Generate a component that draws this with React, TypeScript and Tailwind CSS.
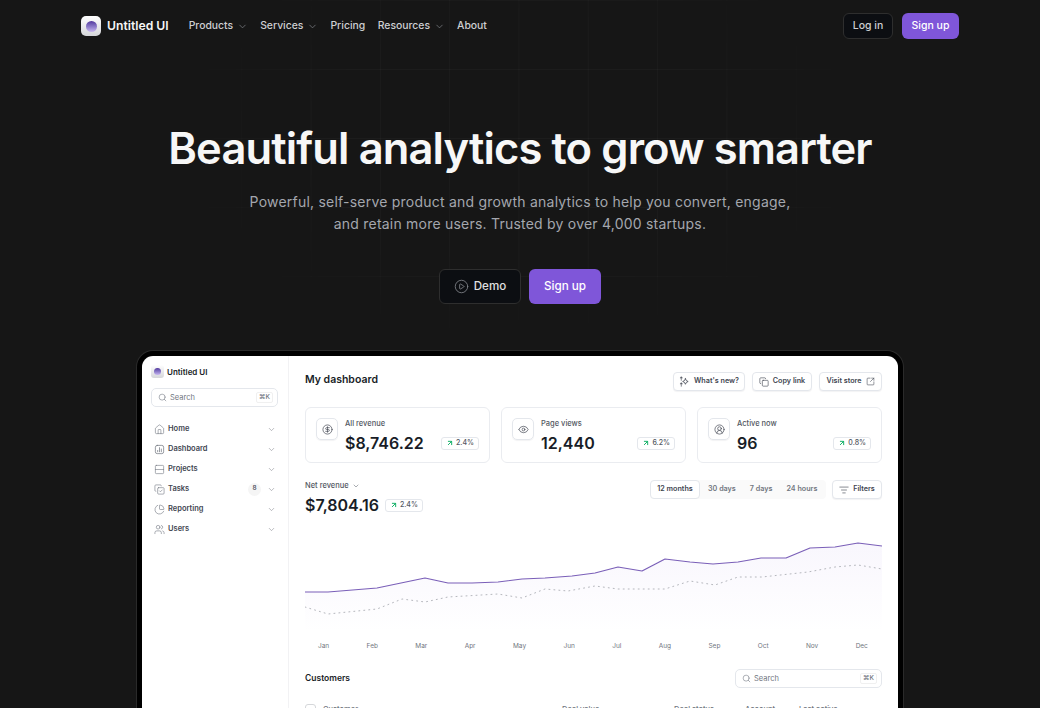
import { ArrowUpRight, ChartPie, ChevronDown, CirclePlay, CircleDollarSign, CircleUserRound, Copy, CopyCheck, Eye, House, ListFilter, Rows2, Search, SquareArrowOutUpRight, Users } from 'lucide-react';
import type { ReactNode } from 'react';

const solid = [[0, 52], [23, 52], [72, 48], [120, 38], [143, 43], [167, 43], [193, 42], [217, 39], [240, 38], [267, 36], [290, 33], [313, 27], [337, 31], [360, 19], [385, 22], [408, 24], [433, 22], [456, 18], [481, 18], [505, 8], [530, 7], [553, 3], [577, 6]];
const dotted = [[0, 67], [23, 74], [72, 69], [97, 59], [120, 62], [143, 57], [193, 54], [217, 58], [240, 49], [263, 51], [290, 46], [313, 49], [360, 49], [385, 41], [410, 45], [433, 37], [457, 37], [503, 32], [530, 27], [553, 25], [577, 29]];
const line = (pts: number[][]) => pts.map((p) => p.join(',')).join(' ');

const months = ['Jan', 'Feb', 'Mar', 'Apr', 'May', 'Jun', 'Jul', 'Aug', 'Sep', 'Oct', 'Nov', 'Dec'];

function Logo({ box, dot }: { box: string; dot: string }) {
  return (
    <div className={`grid place-items-center bg-gradient-to-b from-white to-[#d5d6da] ${box}`}>
      <div className={`rounded-full bg-gradient-to-b from-[#53389e] to-[#c9b8f0] ${dot}`} />
    </div>
  );
}

function NavItem({ label, menu }: { label: string; menu?: boolean }) {
  return (
    <a className="flex items-center gap-[3.5px] text-[10.4px] leading-none font-medium text-[#cecfd2]">
      {label}
      {menu ? <ChevronDown size={11} strokeWidth={1.5} className="text-[#85888e]" /> : null}
    </a>
  );
}

function SideItem({ icon, label, count }: { icon: ReactNode; label: string; count?: string }) {
  return (
    <div className="flex h-5 items-center pl-[3px] pr-[3px] text-[#414651]">
      <span className="w-[14px] text-[#717680]">{icon}</span>
      <span className="flex-1 text-[7.5px] font-semibold">{label}</span>
      {count ? (
        <span className="mr-[6px] grid size-[13px] place-items-center rounded-full bg-[#f5f5f5] text-[6.5px] font-medium">{count}</span>
      ) : null}
      <ChevronDown size={9} strokeWidth={1.5} className="text-[#85888e]" />
    </div>
  );
}

function OutlineButton({ width, children }: { width: string; children: ReactNode }) {
  return (
    <button type="button" className={`flex h-[19px] items-center justify-center gap-1 rounded-[4px] border border-[#e4e7ec] bg-white text-[7.2px] font-semibold text-[#414651] shadow-[0_1px_1px_rgba(16,24,40,0.05)] ${width}`}>
      {children}
    </button>
  );
}

function Trend({ value }: { value: string }) {
  return (
    <span className="flex h-[13px] items-center gap-[2px] rounded-[3px] border border-[#e4e7ec] bg-white px-[4px] text-[7px] font-medium text-[#535862]">
      <ArrowUpRight size={8} strokeWidth={3} className="text-[#17b26a]" />
      {value}
    </span>
  );
}

function StatCard({ icon, label, value, change }: { icon: ReactNode; label: string; value: string; change: string }) {
  return (
    <div className="flex h-[56px] flex-1 gap-[7px] rounded-[6px] border border-[#eaecf0] bg-white px-[10px] pt-[10px]">
      <div className="grid size-[22px] shrink-0 place-items-center rounded-[5px] border border-[#e4e7ec] text-[#414651] shadow-[0_1px_1px_rgba(16,24,40,0.05)]">
        {icon}
      </div>
      <div className="flex-1">
        <p className="mt-[1px] text-[7.5px] leading-[10px] font-medium text-[#535862]">{label}</p>
        <div className="mt-[4px] flex items-center justify-between">
          <span className="text-[16px] leading-[20px] font-semibold text-[#181d27]">{value}</span>
          <Trend value={change} />
        </div>
      </div>
    </div>
  );
}

function SearchField({ width }: { width: string }) {
  return (
    <div className={`flex h-[19px] items-center gap-[3px] rounded-[5px] border border-[#e4e7ec] bg-white pl-[6px] pr-[4px] text-[7.5px] text-[#717680] ${width}`}>
      <Search size={9} strokeWidth={1.5} />
      <span className="flex-1">Search</span>
      <span className="rounded-[2px] border border-[#f0f0f0] px-[2px] text-[6.5px] leading-[9px] font-medium">⌘K</span>
    </div>
  );
}

function Sparkles() {
  return (
    <svg width="11" height="11" viewBox="0 0 24 24" fill="none" stroke="currentColor" strokeWidth="1.8" strokeLinecap="round" strokeLinejoin="round" aria-hidden>
      <path d="M14 6l2 4 4 2-4 2-2 4-2-4-4-2 4-2 2-4z" />
      <path d="M5 2v3M5 8v1M3 4h4M5 15v3M3 17h4M5 21v1" />
    </svg>
  );
}

function BarsIcon() {
  return (
    <svg width="11" height="11" viewBox="0 0 24 24" fill="none" stroke="currentColor" strokeWidth="1.6" strokeLinecap="round" strokeLinejoin="round" aria-hidden>
      <rect x="3" y="3" width="18" height="18" rx="4" />
      <path d="M8 17v-3M12 17V8M16 17v-6" />
    </svg>
  );
}

function Chart() {
  return (
    <svg width="577" height="100" viewBox="0 0 577 100" fill="none" className="block" aria-hidden>
      <defs>
        <linearGradient id="revenueFill" x1="0" y1="0" x2="0" y2="1">
          <stop offset="0" stopColor="#7f56d9" stopOpacity="0.05" />
          <stop offset="1" stopColor="#7f56d9" stopOpacity="0" />
        </linearGradient>
      </defs>
      <polygon points={`${line(solid)} 577,92 0,92`} fill="url(#revenueFill)" />
      <polyline points={line(dotted)} stroke="#b5b7bd" strokeWidth="1" strokeDasharray="1 4" strokeLinecap="round" />
      <polyline points={line(solid)} stroke="#7a5fb8" strokeWidth="1.2" strokeLinejoin="round" />
    </svg>
  );
}

function Dashboard() {
  return (
    <div className="ml-[137px] w-[766px] rounded-[16px] border-[5px] border-black bg-black shadow-[0_0_0_1px_#2a2a2a]">
      <div className="flex h-[500px] overflow-hidden rounded-[11px] bg-white [font-family:Inter,sans-serif]">
        <aside className="w-[147px] shrink-0 border-r border-[#f2f2f4] px-[9px] pt-[9px]">
          <div className="flex items-center gap-[3px]">
            <Logo box="size-[13px] rounded-[3px]" dot="size-[7px]" />
            <span className="text-[8px] font-semibold text-[#181d27]">Untitled UI</span>
          </div>
          <SearchField width="mt-[10px] w-[127px]" />
          <nav className="mt-[12px]">
            <SideItem icon={<House size={11} strokeWidth={1.3} />} label="Home" />
            <SideItem icon={<BarsIcon />} label="Dashboard" />
            <SideItem icon={<Rows2 size={11} strokeWidth={1.3} />} label="Projects" />
            <SideItem icon={<CopyCheck size={11} strokeWidth={1.3} />} label="Tasks" count="8" />
            <SideItem icon={<ChartPie size={11} strokeWidth={1.3} />} label="Reporting" />
            <SideItem icon={<Users size={11} strokeWidth={1.3} />} label="Users" />
          </nav>
        </aside>

        <main className="flex-1 px-[16px] pt-[16px]">
          <div className="flex h-[19px] items-start justify-between">
            <h2 className="text-[10.5px] leading-[15px] font-semibold text-[#181d27]">My dashboard</h2>
            <div className="flex gap-[7px]">
              <OutlineButton width="w-[72px]"><Sparkles />What's new?</OutlineButton>
              <OutlineButton width="w-[60px]"><Copy size={10} strokeWidth={1.5} />Copy link</OutlineButton>
              <OutlineButton width="w-[63px]">Visit store<SquareArrowOutUpRight size={9} strokeWidth={1.5} /></OutlineButton>
            </div>
          </div>

          <div className="mt-[16px] flex gap-[11px]">
            <StatCard icon={<CircleDollarSign size={11} strokeWidth={1.5} />} label="All revenue" value="$8,746.22" change="2.4%" />
            <StatCard icon={<Eye size={11} strokeWidth={1.5} />} label="Page views" value="12,440" change="6.2%" />
            <StatCard icon={<CircleUserRound size={11} strokeWidth={1.5} />} label="Active now" value="96" change="0.8%" />
          </div>

          <div className="mt-[17px] flex items-start justify-between">
            <div className="pt-[1px]">
              <div className="flex items-center gap-[3px] text-[7.5px] leading-[10px] font-medium text-[#535862]">
                Net revenue
                <ChevronDown size={8} strokeWidth={1.5} />
              </div>
              <div className="mt-[2px] flex items-center gap-[6px]">
                <span className="text-[16px] leading-[24px] font-semibold text-[#181d27]">$7,804.16</span>
                <Trend value="2.4%" />
              </div>
            </div>
            <div className="flex gap-[6px]">
              <div className="flex h-[19px] w-[176px] items-center rounded-[4px] bg-[#fafafa] text-[7.2px] font-semibold text-[#717680]">
                <span className="flex h-[19px] w-[50px] items-center justify-center rounded-[4px] border border-[#e4e7ec] bg-white text-[#414651]">12 months</span>
                <span className="ml-[8px]">30 days</span>
                <span className="ml-[14px]">7 days</span>
                <span className="ml-[14px]">24 hours</span>
              </div>
              <OutlineButton width="w-[50px]"><ListFilter size={10} strokeWidth={1.5} />Filters</OutlineButton>
            </div>
          </div>

          <div className="mt-[23px]"><Chart /></div>

          <div className="mt-[2px] flex justify-between pl-[13px] pr-[14px] text-[6.5px] leading-[9px] text-[#717680]">
            {months.map((m) => <span key={m}>{m}</span>)}
          </div>

          <div className="mt-[18px] flex h-[19px] items-center justify-between">
            <h3 className="text-[8.5px] font-semibold text-[#181d27]">Customers</h3>
            <SearchField width="w-[147px]" />
          </div>

          <div className="mt-[16px] flex items-center text-[7.5px] font-medium text-[#717680]">
            <span className="size-[11px] rounded-[3px] border border-[#d5d7da]" />
            <span className="ml-[7px] w-[239px]">Customer</span>
            <span className="w-[112px]">Deal value</span>
            <span className="w-[71px]">Deal status</span>
            <span className="w-[54px]">Account</span>
            <span>Last active</span>
          </div>
        </main>
      </div>
    </div>
  );
}

function GridLines() {
  // faint guide lines behind the hero, fading out towards the edges
  return (
    <div className="pointer-events-none absolute left-[173px] top-0 h-[346px] w-[694px] bg-[linear-gradient(to_right,rgba(255,255,255,0.028)_1px,transparent_1px),linear-gradient(to_bottom,rgba(255,255,255,0.028)_1px,transparent_1px)] bg-[size:69.3px_69px] bg-[position:-1px_0] [mask-image:radial-gradient(ellipse_at_50%_40%,black_40%,transparent_75%)]" />
  );
}

export default function App() {
  return (
    <div className="relative h-[708px] overflow-hidden bg-[#161616] [font-family:Inter,sans-serif]">
      <GridLines />

      <header className="relative flex h-[52px] items-center justify-between pl-[81px] pr-[81px]">
        <div className="flex items-center">
          <div className="flex items-center gap-[6px]">
            <Logo box="size-[20px] rounded-[5px]" dot="size-[11px]" />
            <span className="text-[12.2px] font-semibold text-[#f7f7f7]">Untitled UI</span>
          </div>
          <nav className="ml-[20px] flex items-center gap-[12.5px]">
            <NavItem label="Products" menu />
            <NavItem label="Services" menu />
            <NavItem label="Pricing" />
            <NavItem label="Resources" menu />
            <NavItem label="About" />
          </nav>
        </div>
        <div className="flex items-center gap-[9px]">
          <button type="button" className="h-[26px] w-[50px] rounded-[6px] border border-[#2e2e2e] bg-[#0c0e12] text-[10.5px] font-medium text-[#cecfd2]">Log in</button>
          <button type="button" className="h-[26px] w-[57px] rounded-[6px] bg-[#7f56d9] text-[10.5px] font-medium text-white">Sign up</button>
        </div>
      </header>

      <section className="relative flex flex-col items-center">
        <h1 className="mt-[64px] text-[43.5px] leading-[64px] font-semibold tracking-[-0.87px] text-[#f7f7f7]">Beautiful analytics to grow smarter</h1>
        <p className="mt-[11px] text-center text-[14px] leading-[22px] tracking-[0.22px] text-[#a4a7ae]">
          Powerful, self-serve product and growth analytics to help you convert, engage,
          <br />
          and retain more users. Trusted by over 4,000 startups.
        </p>
        <div className="mt-[34px] flex gap-[8px]">
          <button type="button" className="flex h-[35px] w-[82px] items-center justify-center gap-[5px] rounded-[6px] border border-[#2e2e2e] bg-[#0c0e12] text-[11.6px] font-medium text-[#e0e0e0]">
            <CirclePlay size={15} strokeWidth={1.3} className="text-[#85888e]" />
            Demo
          </button>
          <button type="button" className="h-[35px] w-[72px] rounded-[6px] bg-[#7f56d9] text-[11.7px] font-medium text-white">Sign up</button>
        </div>
      </section>

      <div className="relative mt-[47px]">
        <Dashboard />
      </div>
    </div>
  );
}
